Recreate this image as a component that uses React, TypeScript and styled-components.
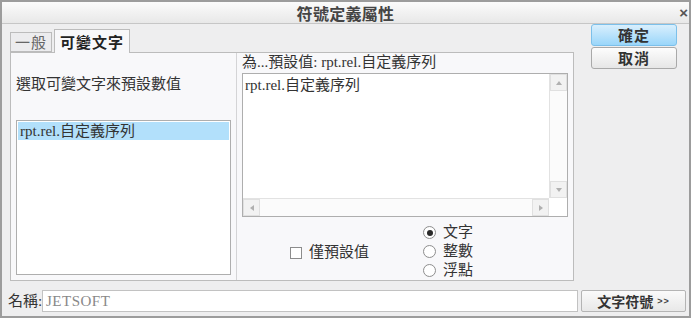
import React from "react";
import styled, { createGlobalStyle } from "styled-components";

const FONT = `"Liberation Serif", "Noto Sans CJK TC", serif`;
const BOLD = `"Noto Sans CJK TC", "Liberation Sans", sans-serif`;

const GlobalStyle = createGlobalStyle`
  html, body { margin: 0; padding: 0; background: #ffffff; }
  body { font-family: ${FONT}; color: #333; }
  * { box-sizing: border-box; }
`;

const Window = styled.div`
  width: 691px;
  height: 318px;
  border: 2px solid #9c9c9c;
  background: #eeeeef;
  display: flex;
  flex-direction: column;
`;

const TitleBar = styled.div`
  height: 22px;
  border-bottom: 1px solid #c6c6c6;
  background: linear-gradient(#fbfbfb, #e8e8e8);
  display: grid;
  grid-template-columns: 1fr auto 1fr;
  align-items: center;
`;

const Title = styled.div`
  grid-column: 2;
  font: bold 16px/20px ${BOLD};
  color: #444;
  letter-spacing: 0.3px;
`;

const Close = styled.div`
  grid-column: 3;
  justify-self: end;
  margin-right: 1px;
  font: bold 15px/20px "Liberation Sans", sans-serif;
  color: #555;
`;

const Main = styled.div`
  display: flex;
  padding-left: 8px;
`;

const LeftCol = styled.div`
  padding-top: 5px;
  width: 564px;
`;

const TabStrip = styled.div`
  height: 23px;
  display: flex;
  align-items: flex-end;
  gap: 2px;
  position: relative;
  z-index: 1;
`;

const Tab = styled.div<{ $active?: boolean }>`
  height: ${(p) => (p.$active ? 24 : 20)}px;
  margin-bottom: ${(p) => (p.$active ? -1 : 0)}px;
  padding: 0 ${(p) => (p.$active ? 5 : 4)}px;
  border: 1px solid #bcbcbc;
  border-bottom: ${(p) => (p.$active ? "none" : "1px solid #bcbcbc")};
  background: ${(p) => (p.$active ? "#f8f8fa" : "#ececee")};
  font: ${(p) => (p.$active ? "bold" : "normal")} 15px/20px ${BOLD};
  color: ${(p) => (p.$active ? "#222" : "#666")};
  letter-spacing: 1px;
  display: flex;
  align-items: center;
`;

const Panel = styled.div`
  height: 229px;
  border: 1px solid #bcbcbc;
  background: #f8f8fa;
  display: flex;
`;

const LeftSection = styled.div`
  width: 226px;
  border-right: 1px solid #d4d4d6;
  padding-left: 5px;
  display: flex;
  flex-direction: column;
`;

const Label = styled.div<{ $top?: number }>`
  margin-top: ${(p) => p.$top ?? 0}px;
  font: 15px/18px ${FONT};
  color: #333;
  white-space: nowrap;
`;

const ListBox = styled.div`
  margin-top: 27px;
  width: 215px;
  height: 155px;
  border: 1px solid #aeaeae;
  background: #fff;
  padding: 1px;
`;

const ListItem = styled.div<{ $selected?: boolean }>`
  height: 18px;
  padding-left: 2px;
  font: 15px/18px ${FONT};
  background: ${(p) => (p.$selected ? "#b2e0fb" : "transparent")};
  color: #333;
`;

const RightSection = styled.div`
  flex: 1;
  padding: 0 5px;
  display: flex;
  flex-direction: column;
`;

const TextArea = styled.div`
  margin-top: 2px;
  height: 146px;
  border: 1px solid #aeaeae;
  background: #fff;
  display: grid;
  grid-template-columns: 1fr 18px;
  grid-template-rows: 1fr 18px;
`;

const TextContent = styled.div`
  padding: 2px 2px;
  font: 15px/18px ${FONT};
  color: #333;
`;

const VScroll = styled.div`
  border-left: 1px solid #e2e2e2;
  display: flex;
  flex-direction: column;
  justify-content: space-between;
  background: #fbfbfb;
`;

const HScroll = styled.div`
  border-top: 1px solid #e2e2e2;
  display: flex;
  justify-content: space-between;
  background: #fbfbfb;
`;

const ArrowBtn = styled.div`
  width: 17px;
  height: 17px;
  background: #f2f2f2;
  border: 1px solid #e0e0e0;
  display: flex;
  align-items: center;
  justify-content: center;
`;

const Corner = styled.div`
  background: #fff;
`;

const Options = styled.div`
  flex: 1;
  display: flex;
  align-items: center;
  padding-top: 6px;
  padding-left: 48px;
`;

const CheckRow = styled.div`
  display: flex;
  align-items: center;
  gap: 7px;
  width: 133px;
  margin-top: 2px;
`;

const CheckBox = styled.div`
  width: 12px;
  height: 12px;
  border: 1px solid #8c8c8c;
  background: #fff;
`;

const OptText = styled.span`
  font: 15px/19px ${FONT};
  color: #333;
`;

const RadioGroup = styled.div`
  display: flex;
  flex-direction: column;
`;

const RadioRow = styled.div`
  display: flex;
  align-items: center;
  gap: 7px;
  height: 19px;
`;

const Radio = styled.div<{ $checked?: boolean }>`
  width: 13px;
  height: 13px;
  border-radius: 50%;
  border: 1px solid #8f8f8f;
  background: radial-gradient(circle, #fff 60%, #eee);
  display: flex;
  align-items: center;
  justify-content: center;
  &::after {
    content: "";
    width: 6px;
    height: 6px;
    border-radius: 50%;
    background: ${(p) => (p.$checked ? "#2a2a2a" : "transparent")};
  }
`;

const RightCol = styled.div`
  margin-left: 17px;
  display: flex;
  flex-direction: column;
  gap: 1px;
`;

const Button = styled.div<{ $primary?: boolean }>`
  width: 86px;
  height: 22px;
  border-radius: 3px;
  border: 1px solid ${(p) => (p.$primary ? "#7cc0ea" : "#a9a9a9")};
  background: ${(p) =>
    p.$primary
      ? "linear-gradient(#d9effd, #9ad6fa)"
      : "linear-gradient(#fdfdfd, #e6e6e6)"};
  font: bold 15px/20px ${BOLD};
  color: #333;
  letter-spacing: 1px;
  display: flex;
  align-items: center;
  justify-content: center;
`;

const BottomRow = styled.div`
  margin-top: 8px;
  height: 23px;
  display: flex;
  align-items: center;
  padding-left: 6px;
`;

const NameLabel = styled.span`
  width: 34px;
  flex-shrink: 0;
  white-space: nowrap;
  font: 15px/20px ${FONT};
  color: #333;
`;

const NameInput = styled.div`
  flex: 1;
  height: 22px;
  border: 1px solid #c2c2c2;
  background: #fff;
  padding-left: 3px;
  font: 15px/20px ${FONT};
  color: #888;
  letter-spacing: 0.5px;
`;

const SymbolButton = styled.div`
  margin: 1px 3px 0 3px;
  width: 105px;
  flex-shrink: 0;
  height: 22px;
  border: 1px solid #b4b4b4;
  border-radius: 2px;
  background: linear-gradient(#fafafa, #e8e8e8);
  display: flex;
  align-items: center;
  justify-content: center;
  gap: 4px;
  font: bold 14px/20px ${BOLD};
  color: #333;
`;

const Chevrons = styled.span`
  font: bold 9px/20px "Liberation Sans", sans-serif;
  letter-spacing: 1px;
  color: #444;
`;

const Tri = ({ dir }: { dir: "up" | "down" | "left" | "right" }) => {
  const pts = {
    up: "1,6 4,2 7,6",
    down: "1,2 4,6 7,2",
    left: "6,1 2,4 6,7",
    right: "2,1 6,4 2,7",
  }[dir];
  return (
    <svg width="8" height="8" viewBox="0 0 8 8">
      <polygon points={pts} fill="#b0b0b0" />
    </svg>
  );
};

export default function App() {
  return (
    <>
      <GlobalStyle />
      <Window>
        <TitleBar>
          <Title>符號定義屬性</Title>
          <Close>×</Close>
        </TitleBar>
        <Main>
          <LeftCol>
            <TabStrip>
              <Tab>一般</Tab>
              <Tab $active>可變文字</Tab>
            </TabStrip>
            <Panel>
              <LeftSection>
                <Label $top={22}>選取可變文字來預設數值</Label>
                <ListBox>
                  <ListItem $selected>rpt.rel.自定義序列</ListItem>
                </ListBox>
              </LeftSection>
              <RightSection>
                <Label $top={0}>為...預設值: rpt.rel.自定義序列</Label>
                <TextArea>
                  <TextContent>rpt.rel.自定義序列</TextContent>
                  <VScroll>
                    <ArrowBtn>
                      <Tri dir="up" />
                    </ArrowBtn>
                    <ArrowBtn>
                      <Tri dir="down" />
                    </ArrowBtn>
                  </VScroll>
                  <HScroll>
                    <ArrowBtn>
                      <Tri dir="left" />
                    </ArrowBtn>
                    <ArrowBtn>
                      <Tri dir="right" />
                    </ArrowBtn>
                  </HScroll>
                  <Corner />
                </TextArea>
                <Options>
                  <CheckRow>
                    <CheckBox />
                    <OptText>僅預設值</OptText>
                  </CheckRow>
                  <RadioGroup>
                    <RadioRow>
                      <Radio $checked />
                      <OptText>文字</OptText>
                    </RadioRow>
                    <RadioRow>
                      <Radio />
                      <OptText>整數</OptText>
                    </RadioRow>
                    <RadioRow>
                      <Radio />
                      <OptText>浮點</OptText>
                    </RadioRow>
                  </RadioGroup>
                </Options>
              </RightSection>
            </Panel>
          </LeftCol>
          <RightCol>
            <Button $primary>確定</Button>
            <Button>取消</Button>
          </RightCol>
        </Main>
        <BottomRow>
          <NameLabel>名稱:</NameLabel>
          <NameInput>JETSOFT</NameInput>
          <SymbolButton>
            文字符號<Chevrons>&gt;&gt;</Chevrons>
          </SymbolButton>
        </BottomRow>
      </Window>
    </>
  );
}
